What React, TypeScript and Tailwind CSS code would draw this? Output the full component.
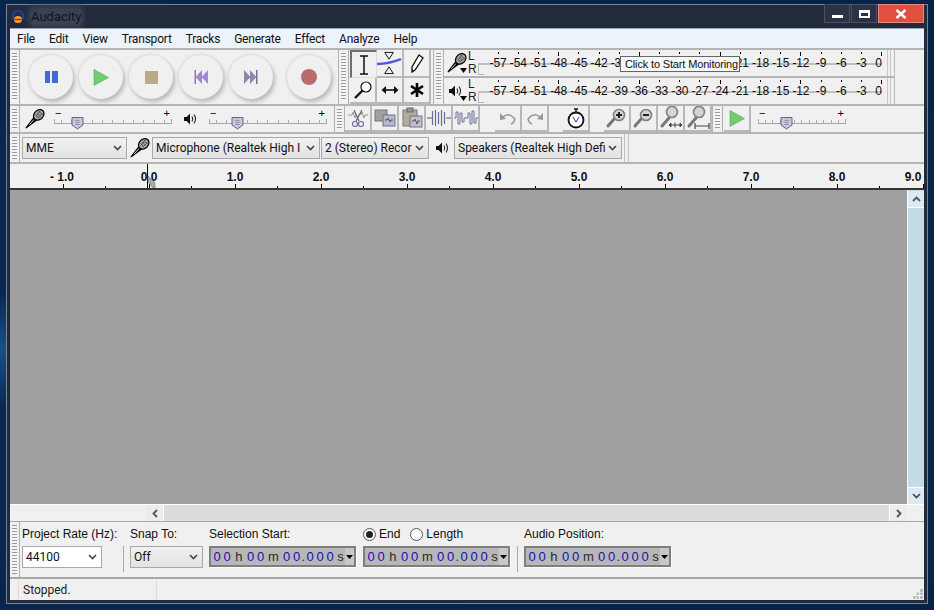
import React from "react";

const UI = { fontFamily: '"Roboto","Liberation Sans",sans-serif' };
const AR = { fontFamily: '"Liberation Sans",Arial,sans-serif' };

function Handle({ h = "h-full" }: { h?: string }) {
  return (
    <div className={`w-[10px] shrink-0 ${h} px-[2px] py-[3px] border-r border-[#b0b0b0]`}>
      <div className="w-full h-full bg-[repeating-linear-gradient(to_bottom,#9a9a9a_0,#9a9a9a_1px,#f6f6f6_1px,#f6f6f6_3px)]" />
    </div>
  );
}

function Mic({ s = 22 }: { s?: number }) {
  return (
    <svg width={s} height={s} viewBox="0 0 24 24" className="shrink-0">
      <path d="M11.5 8 L0.5 22.5 L1.5 23.5 L16 12.5 Z" fill="#000" />
      <path d="M11 12.5 L5 19" stroke="#fff" strokeWidth="1" />
      <ellipse cx="16.5" cy="7" rx="7" ry="5.5" transform="rotate(-45 16.5 7)" fill="#a8a8a8" stroke="#000" strokeWidth="1.5" />
      <path d="M12.5 6.5 L17.5 11.5 M14.5 4.5 L19.5 9.5 M16.5 2.5 L21.5 7.5 M13 9 L18 2.5 M15 11 L21 5" stroke="#333" strokeWidth="0.8" />
    </svg>
  );
}

function Speaker() {
  return (
    <svg width="16" height="16" viewBox="0 0 16 16" className="shrink-0">
      <path d="M2 6 H4.5 L8 2.5 V13.5 L4.5 10 H2 Z" fill="#111" />
      <path d="M10 5.5 Q11.5 8 10 10.5 M12 3.5 Q15 8 12 12.5" stroke="#222" fill="none" strokeWidth="1.1" />
    </svg>
  );
}

function Slider({ w, pos }: { w: number; pos: number }) {
  const ticks = Array.from({ length: 11 });
  return (
    <div className="relative h-[26px] shrink-0" style={{ width: w }}>
      <span className="absolute left-[1px] top-[1px] text-[11px] leading-[12px] text-black" style={AR}>−</span>
      <span className="absolute right-[2px] top-[1px] text-[11px] leading-[12px] text-black" style={AR}>+</span>
      <div className="absolute left-0 right-0 top-[13px] h-[5px] border-b border-l border-r border-[#a8a8a8] flex justify-between px-[6px]">
        {ticks.map((_, i) => <i key={i} className="w-px h-[3px] bg-[#aaa] mt-[1px]" />)}
      </div>
      <svg className="absolute top-[10px]" style={{ left: pos }} width="13" height="14" viewBox="0 0 13 14">
        <path d="M1 1.5 H12 V9 L6.5 13 L1 9 Z" fill="#c3c6dc" stroke="#666a78" />
        <path d="M4.5 4.5 H8.5 M4.5 6.5 H8.5 M4.5 8.5 H8.5" stroke="#8a8da0" />
      </svg>
    </div>
  );
}

function RoundBtn({ children, ml = "" }: { children: React.ReactNode; ml?: string }) {
  return (
    <div className={`w-[44px] h-[44px] shrink-0 rounded-full bg-[#f0f0f0] shadow-[2px_3px_4px_#b8b8b8,-1px_-1px_3px_#dcdcdc] flex items-center justify-center ${ml}`}>
      {children}
    </div>
  );
}

function TB({ children, w = "w-[27px]", h = "h-[28px]", pressed }: { children?: React.ReactNode; w?: string; h?: string; pressed?: boolean }) {
  return (
    <div className={`${w} ${h} shrink-0 flex items-center justify-center bg-[#f0f0f0] ${pressed ? "border-l-2 border-t-2 border-r border-b border-[#6e6e6e] border-r-[#ddd] border-b-[#ddd]" : "border-r-2 border-b-2 border-[#b8b8b8]"}`}>
      {children}
    </div>
  );
}

function Zoomer({ mark, under }: { mark?: "+" | "-"; under?: "arrows" | "bar" }) {
  return (
    <svg width="24" height="24" viewBox="0 0 24 24">
      <path d="M10 12 L3 20" stroke="#777" strokeWidth="3" strokeLinecap="round" />
      <circle cx={under ? 13 : 14} cy={under ? 6 : 9} r="5.5" fill="#d4d4d4" stroke="#808080" strokeWidth="1.6" />
      {mark && <path d="M11 9 H17" stroke="#222" strokeWidth="2" />}
      {mark === "+" && <path d="M14 6 V12" stroke="#222" strokeWidth="2" />}
      {under === "arrows" && <path d="M10 19 H23 M10 19 L12 17 V21 Z M23 19 L21 17 V21 Z M16 16.5 V21.5" stroke="#444" fill="#444" />}
      {under === "bar" && <path d="M9 20 H23 M9 17 V23 M23 17 V23" stroke="#444" strokeWidth="1.2" fill="none" />}
    </svg>
  );
}

function Wave({ kind }: { kind: "cut" | "copy" | "paste" | "trim" | "silence" }) {
  const c = "#6a6f9a";
  if (kind === "cut")
    return (
      <svg width="22" height="22" viewBox="0 0 22 22">
        <path d="M1 8 H5 L6 5 L8 11 L9 8 M14 8 L15 5 L17 11 L18 8 H21" stroke="#999" fill="none" />
        <path d="M7 3 L12 14 M15 3 L9 14" stroke="#666" strokeWidth="1.3" />
        <circle cx="8" cy="17" r="2.5" fill="none" stroke={c} strokeWidth="1.2" />
        <circle cx="14" cy="17" r="2.5" fill="none" stroke={c} strokeWidth="1.2" />
      </svg>
    );
  if (kind === "copy")
    return (
      <svg width="22" height="22" viewBox="0 0 22 22">
        <rect x="1" y="3" width="12" height="11" fill="#a0a0a0" stroke="#777" />
        <rect x="9" y="8" width="12" height="11" fill="#b8b8c8" stroke="#6a6f9a" />
        <path d="M11 13 H13 L14 11 L16 15 L17 13 H19" stroke="#555" fill="none" />
      </svg>
    );
  if (kind === "paste")
    return (
      <svg width="22" height="22" viewBox="0 0 22 22">
        <rect x="2" y="3" width="14" height="16" fill="#b4ae96" stroke="#777" />
        <rect x="6" y="1" width="6" height="4" fill="#999" stroke="#666" />
        <rect x="9" y="9" width="12" height="11" fill="#c0c0cc" stroke="#6a6f9a" />
        <path d="M11 14 H13 L14 12 L16 17 L17 14 H19" stroke="#555" fill="none" />
      </svg>
    );
  if (kind === "trim")
    return (
      <svg width="24" height="22" viewBox="0 0 24 22">
        <path d="M0 11 H5 M19 11 H24" stroke="#555" />
        <path d="M5.5 4 V18 M8.5 3 V19 M11.5 5 V17 M14.5 3 V19 M17.5 5 V17" stroke={c} strokeWidth="1.2" />
      </svg>
    );
  return (
    <svg width="24" height="22" viewBox="0 0 24 22">
      <path d="M0 11 H2 V5 H4 V17 H6 V6 H8 V15 H10 V11 H14 V6 H16 V17 H18 V4 H20 V16 H22 V11 H24" stroke={c} fill="none" />
    </svg>
  );
}

const dbs = ["-57", "-54", "-51", "-48", "-45", "-42", "-39", "-36", "-33", "-30", "-27", "-24", "-21", "-18", "-15", "-12", "-9", "-6", "-3", "0"];
const hiddenByTip = ["-36", "-33", "-30", "-27", "-24"];

function Meter({ icon, tooltip }: { icon: React.ReactNode; tooltip?: boolean }) {
  return (
    <div className={`relative flex items-stretch ${tooltip ? "h-[28px] border-b-2 border-[#b4b4b4]" : "h-[26px]"}`}>
      <div className="w-[24px] shrink-0 relative flex items-center pl-[3px]">
        {icon}
        <svg className="absolute left-[16px] bottom-[3px]" width="7" height="5" viewBox="0 0 7 5"><path d="M0 0 H7 L3.5 5 Z" fill="#000" /></svg>
      </div>
      <div className="w-[10px] shrink-0 flex flex-col justify-between text-[12px] leading-[13px] text-[#222]" style={AR}>
        <span>L</span>
        <span>R</span>
      </div>
      <div className="relative w-[412px] shrink-0">
        <div className="absolute left-0 top-[13px] bottom-[1px] w-[6px] border-l border-t border-b border-[#b8b8b8]" />
        <div className="absolute left-0 right-[8px] top-[13px] h-[2px] bg-[#c0c0c0]" />
        <div className="absolute left-[10px] top-0 h-full flex" style={AR}>
          {dbs.map((d, i) => (
            <div key={d} className="w-[20.2px] shrink-0 flex flex-col items-center">
              <div className="h-[4px] mt-[2px]">
                <i className={`block w-px ${i % 4 === 3 ? "h-[4px]" : "h-[2px]"} bg-black`} />
              </div>
              {!(tooltip && hiddenByTip.includes(d)) && (
                <span className={`text-[12px] leading-[14px] text-[#0c0c0c] whitespace-nowrap tracking-[-0.1px] ${d === "0" ? "-translate-x-[3px]" : ""}`}>{d}</span>
              )}
            </div>
          ))}
        </div>
        {tooltip && (
          <div className="absolute left-[142px] top-[6px] w-[120px] h-[16px] bg-[#f7f7f7] border border-[#666] text-[11px] leading-[14px] tracking-[-0.15px] text-[#111] pl-[4px] whitespace-nowrap z-10" style={AR}>
            Click to Start Monitoring
          </div>
        )}
      </div>
      <div className="w-[4px] -ml-[3px] border-l border-r border-[#c8c8c8]" />
      <div className="w-[3px] ml-[1px] border-r border-[#bdbdbd]" />
    </div>
  );
}

function Chevron() {
  return (
    <svg width="9" height="6" viewBox="0 0 9 6" className="shrink-0"><path d="M1 1 L4.5 4.5 L8 1" stroke="#444" strokeWidth="1.6" fill="none" /></svg>
  );
}

function Sel({ text, w, white }: { text: string; w: string; white?: boolean }) {
  return (
    <div className={`${w} h-[22px] shrink-0 border border-[#a9a9a9] flex items-center pl-[3px] pr-[4px] ${white ? "bg-white" : "bg-[linear-gradient(#f1f1f1,#e2e2e2)]"}`}>
      <span className="flex-1 overflow-hidden whitespace-nowrap text-[12px] text-[#111]" style={UI}>{text}</span>
      <span className="w-[12px] flex justify-end"><Chevron /></span>
    </div>
  );
}

function TimeBox() {
  const parts: [string, number, boolean][] = [
    ["0", 10, true], ["0", 10, true], ["h", 13.5, false], ["0", 10, true], ["0", 10, true], ["m", 16, false],
    ["0", 10, true], ["0", 10, true], [".", 3.5, false], ["0", 10, true], ["0", 10, true], ["0", 10, true], ["s", 11, false],
  ];
  return (
    <div className="w-[147px] h-[21px] shrink-0 bg-[#b7b7b7] border-2 border-[#7e7e7e] shadow-[1px_1px_0_#fff] flex items-center pl-[1px] relative">
      {parts.map(([c, w, blue], i) => (
        <span key={i} className={`text-[13px] text-center leading-none shrink-0 ${blue ? "text-[#1a10b0]" : "text-[#2a2a2a]"}`} style={{ width: w, ...AR }}>{c}</span>
      ))}
      <div className="absolute right-0 top-0 bottom-0 w-[9px] bg-[#c8c8c8] flex items-center justify-center">
        <svg width="7" height="4" viewBox="0 0 7 4"><path d="M0 0 H7 L3.5 4 Z" fill="#000" /></svg>
      </div>
    </div>
  );
}

const ruler = ["- 1.0", "0.0", "1.0", "2.0", "3.0", "4.0", "5.0", "6.0", "7.0", "8.0", "9.0"];

function Ruler() {
  return (
    <div className="relative h-[28px] bg-[#f0f0f0] flex pl-[10px] border-t-2 border-[#b4b4b4] border-b-2 border-b-[#333] overflow-hidden shrink-0">
      {ruler.map((r, i) => (
        <div key={r} className="relative w-[86px] shrink-0 flex flex-col items-center justify-end">
          <span className={`text-[12px] font-bold leading-[14px] text-[#111] ${i === 10 ? "-translate-x-[10px]" : ""} ${i === 0 ? "-translate-x-[1px]" : ""}`} style={AR}>{r}</span>
          <i className="w-px h-[4px] bg-black" />
          <i className="absolute bottom-0 right-0 w-px h-[2px] bg-black" />
        </div>
      ))}
      <i className="absolute left-[137px] top-0 bottom-0 w-px bg-black" />
      <svg className="absolute left-[137px] bottom-0" width="9" height="13" viewBox="0 0 9 13"><path d="M1 1 L8 8 V13 H6 L1 7 Z" fill="#a8a8a8" stroke="#777" strokeWidth="0.6" /></svg>
    </div>
  );
}

export default function App() {
  return (
    <div className="w-[934px] h-[610px] overflow-hidden pt-[4px] pl-[6px] bg-[radial-gradient(circle_at_0_350px,#1c4f86_0,#08264e_6%,#05224a_100%)]">
      <div className="w-[922px] h-[600px] flex flex-col bg-[#222b3c] border border-[#7c8390] px-[3px] pb-[3px]">
        {/* Title bar */}
        <div className="h-[23px] shrink-0 flex items-start justify-between">
          <div className="flex items-center h-[23px] gap-[6px] pl-[1px]">
            <svg width="14" height="14" viewBox="0 0 14 14">
              <path d="M2 9 V6 A5 5 0 0 1 12 6 V9" stroke="#1f3fb0" strokeWidth="2.2" fill="none" />
              <ellipse cx="7" cy="9.5" rx="4" ry="3.5" fill="#f2a818" />
              <path d="M3.5 9.5 H10.5" stroke="#d02020" strokeWidth="1.6" />
            </svg>
            <span className="text-[13px] leading-[16px] text-[#0f141c] bg-[#3a4254] shadow-[0_0_5px_3px_#3a4254] rounded-sm" style={UI}>Audacity</span>
          </div>
          <div className="flex items-start gap-px -mt-px">
            <div className="w-[26px] h-[19px] flex items-center justify-center border border-[#4a5263] bg-[#2a3243]">
              <i className="w-[11px] h-[3px] mt-[6px] bg-white" />
            </div>
            <div className="w-[26px] h-[19px] flex items-center justify-center border border-[#4a5263] bg-[#2a3243]">
              <i className="w-[11px] h-[8px] border-2 border-t-[3px] border-white" />
            </div>
            <div className="w-[46px] h-[19px] flex items-center justify-center bg-[#df5040] border border-[#e88a80]">
              <svg width="12" height="10" viewBox="0 0 12 10"><path d="M1.5 1 L10.5 9 M10.5 1 L1.5 9" stroke="#fff" strokeWidth="2.4" /></svg>
            </div>
          </div>
        </div>

        {/* Client */}
        <div className="flex-1 min-h-0 flex flex-col bg-[#f0f0f0] border-t border-[#9aa4b4]">
          {/* Menu */}
          <div className="h-[19px] shrink-0 flex items-center bg-[#ecf3fb] pl-[7px] gap-[14px] text-[12px] tracking-[-0.2px] text-[#111]" style={UI}>
            {["File", "Edit", "View", "Transport", "Tracks", "Generate", "Effect", "Analyze", "Help"].map((m) => (
              <span key={m}>{m}</span>
            ))}
          </div>

          {/* Row 1 */}
          <div className="h-[58px] shrink-0 flex border-t-2 border-b-2 border-[#b4b4b4]">
            <div className="w-[329px] shrink-0 flex items-center border-r border-[#b4b4b4]">
              <Handle />
              <div className="flex items-center pl-[9px] gap-[6px]">
                <RoundBtn>
                  <div className="flex gap-[2px]"><i className="w-[5px] h-[12px] bg-[#4169d8]" /><i className="w-[6px] h-[12px] bg-[#4169d8]" /></div>
                </RoundBtn>
                <RoundBtn>
                  <svg width="16" height="17" viewBox="0 0 16 17"><path d="M1 0.5 L15.5 8.5 L1 16.5 Z" fill="#71cc71" stroke="#58a858" strokeWidth="0.6" /></svg>
                </RoundBtn>
                <RoundBtn><i className="w-[13px] h-[13px] bg-[#b7ab8c]" /></RoundBtn>
                <RoundBtn>
                  <svg width="14" height="14" viewBox="0 0 14 14"><path d="M0.5 0 H2 V14 H0.5 Z" fill="#8a78b8" /><path d="M8 0 V14 L1.5 7 Z M14 0 V14 L7.5 7 Z" fill="#a08ad0" /></svg>
                </RoundBtn>
                <RoundBtn>
                  <svg width="14" height="14" viewBox="0 0 14 14"><path d="M12 0 H13.5 V14 H12 Z" fill="#776e96" /><path d="M0 0 V14 L6.5 7 Z M6 0 V14 L12.5 7 Z" fill="#9086b0" /></svg>
                </RoundBtn>
                <RoundBtn ml="ml-[8px]"><i className="w-[16px] h-[16px] rounded-full bg-[#b86c6c]" /></RoundBtn>
              </div>
            </div>
            <div className="w-[95px] shrink-0 flex border-r border-[#b4b4b4]">
              <Handle />
              <div className="grid grid-cols-3 grid-rows-[28px_26px] w-[81px] ml-px">
                <TB pressed><svg width="12" height="20" viewBox="0 0 12 20"><path d="M2 1 H10 M6 1 V19 M2 19 H10" stroke="#111" strokeWidth="1.5" /></svg></TB>
                <TB>
                  <svg width="26" height="24" viewBox="0 0 26 24"><path d="M8 1 H17 L12.5 8 Z M8 23 H17 L12.5 16 Z" fill="none" stroke="#111" /><path d="M0 13 Q12 13 25 8" stroke="#5558d8" strokeWidth="2.5" fill="none" /></svg>
                </TB>
                <TB><svg width="16" height="20" viewBox="0 0 16 20"><path d="M10 2 L14 5 L6 17 L3 19 L3 14 Z" fill="#fff" stroke="#111" strokeWidth="1.3" /><path d="M3 19 L3 16 L5 18 Z" fill="#111" /></svg></TB>
                <TB h="h-[26px]"><svg width="20" height="20" viewBox="0 0 20 20"><circle cx="13" cy="7" r="5" fill="#fff" stroke="#111" strokeWidth="1.2" /><path d="M9.5 10.5 L2 18" stroke="#111" strokeWidth="2.4" /></svg></TB>
                <TB h="h-[26px]"><svg width="18" height="10" viewBox="0 0 18 10"><path d="M4 5 H14" stroke="#111" strokeWidth="1.6" /><path d="M0.5 5 L5 1 V9 Z M17.5 5 L13 1 V9 Z" fill="#111" /></svg></TB>
                <TB h="h-[26px]"><svg width="16" height="16" viewBox="0 0 16 16"><path d="M8 1 V15 M2 4 L14 12 M14 4 L2 12" stroke="#000" strokeWidth="2.6" /></svg></TB>
              </div>
            </div>
            <div className="flex-1 flex min-w-0">
              <Handle />
              <div className="flex flex-col">
                <Meter icon={<Mic s={20} />} tooltip />
                <Meter icon={<Speaker />} />
              </div>
            </div>
          </div>

          {/* Row 2 */}
          <div className="h-[28px] shrink-0 flex items-center border-b-2 border-[#b4b4b4]">
            <Handle />
            <div className="ml-[5px]"><Mic s={20} /></div>
            <div className="ml-[9px]"><Slider w={118} pos={17} /></div>
            <div className="ml-[10px]"><Speaker /></div>
            <div className="ml-[11px]"><Slider w={118} pos={22} /></div>
            <div className="ml-[7px] flex items-center h-full border-l border-[#b4b4b4]"><Handle /></div>
            <div className="flex items-center">
              <TB h="h-[26px]"><Wave kind="cut" /></TB>
              <TB h="h-[26px]"><Wave kind="copy" /></TB>
              <TB h="h-[26px]"><Wave kind="paste" /></TB>
              <TB h="h-[26px]"><Wave kind="trim" /></TB>
              <TB h="h-[26px]"><Wave kind="silence" /></TB>
            </div>
            <div className="flex items-center ml-[15px]">
              <TB h="h-[26px]"><svg width="18" height="14" viewBox="0 0 18 14"><path d="M3 7 Q9 0 16 8 Q15 12 12 13" stroke="#999" strokeWidth="1.5" fill="none" /><path d="M1 2 L1 9 L7 8 Z" fill="#999" /></svg></TB>
              <TB h="h-[26px]"><svg width="18" height="14" viewBox="0 0 18 14"><path d="M15 7 Q9 0 2 8 Q3 12 6 13" stroke="#999" strokeWidth="1.5" fill="none" /><path d="M17 2 L17 9 L11 8 Z" fill="#999" /></svg></TB>
            </div>
            <div className="ml-[14px]">
              <TB h="h-[26px]">
                <svg width="20" height="22" viewBox="0 0 20 22"><circle cx="10" cy="13" r="7.5" fill="#fff" stroke="#111" strokeWidth="1.8" /><path d="M8 2 H12 M10 2 V5" stroke="#111" strokeWidth="1.3" fill="none" /><path d="M7 10 L10 15 L13 10" stroke="#2a2ac0" fill="none" /></svg>
              </TB>
            </div>
            <div className="flex items-center ml-[14px]">
              <TB h="h-[26px]"><Zoomer mark="+" /></TB>
              <TB h="h-[26px]"><Zoomer mark="-" /></TB>
              <TB h="h-[26px]"><Zoomer under="arrows" /></TB>
              <TB h="h-[26px]"><Zoomer under="bar" /></TB>
            </div>
            <div className="h-full border-l border-[#b4b4b4]"><Handle /></div>
            <div className="ml-px"><TB h="h-[26px]"><svg width="16" height="17" viewBox="0 0 16 17"><path d="M1 0.5 L15.5 8.5 L1 16.5 Z" fill="#71cc71" stroke="#58a858" strokeWidth="0.6" /></svg></TB></div>
            <div className="ml-[7px]"><Slider w={88} pos={22} /></div>
          </div>

          {/* Row 3 */}
          <div className="h-[28px] shrink-0 flex items-center">
            <Handle />
            <div className="ml-[2px]"><Sel text="MME" w="w-[105px]" /></div>
            <div className="ml-[3px]"><Mic s={20} /></div>
            <div className="ml-[2px]"><Sel text="Microphone (Realtek High I" w="w-[168px]" /></div>
            <div className="ml-px"><Sel text="2 (Stereo) Recor" w="w-[108px]" /></div>
            <div className="ml-[5px]"><Speaker /></div>
            <div className="ml-[4px]"><Sel text="Speakers (Realtek High Defi" w="w-[168px]" /></div>
            <div className="ml-[2px] h-full w-[5px] border-l border-r border-[#c0c0c0]" />
          </div>

          <Ruler />

          {/* Track area + vertical scrollbar */}
          <div className="flex-1 min-h-0 flex">
            <div className="flex-1 bg-[#a0a0a0]" />
            <div className="w-[17px] shrink-0 flex flex-col border-l border-white bg-[#c4dbe8] pt-px">
              <div className="h-[16px] flex items-center justify-center bg-[#dce9f3]"><svg width="9" height="6" viewBox="0 0 9 6"><path d="M1 5 L4.5 1.5 L8 5" stroke="#555" strokeWidth="1.8" fill="none" /></svg></div>
              <div className="flex-1 border-t border-b border-white" />
              <div className="h-[16px] flex items-center justify-center bg-[#dce9f3]"><Chevron /></div>
            </div>
          </div>

          {/* Horizontal scrollbar */}
          <div className="h-[17px] shrink-0 flex border-t border-white">
            <div className="w-[136px] bg-[#f0f0f0]" />
            <div className="w-[17px] flex items-center justify-center bg-[#ececec]"><svg width="6" height="9" viewBox="0 0 6 9"><path d="M5 1 L1.5 4.5 L5 8" stroke="#555" strokeWidth="1.8" fill="none" /></svg></div>
            <div className="flex-1 bg-[#dcdcdc] border-l border-r border-white" />
            <div className="w-[17px] flex items-center justify-center bg-[#ececec]"><svg width="6" height="9" viewBox="0 0 6 9"><path d="M1 1 L4.5 4.5 L1 8" stroke="#555" strokeWidth="1.8" fill="none" /></svg></div>
            <div className="w-[17px] bg-[#f0f0f0]" />
          </div>

          {/* Selection bar */}
          <div className="h-[56px] shrink-0 flex border-t border-[#a8a8a8] text-[12px] text-[#111]" style={AR}>
            <Handle />
            <div className="ml-[2px] flex flex-col pt-[5px] w-[101px] shrink-0">
              <span className="leading-[14px] mb-[5px]">Project Rate (Hz):</span>
              <Sel text="44100" w="w-[80px]" white />
            </div>
            <div className="w-px h-[26px] mt-[24px] bg-[#a8a8a8] shrink-0" />
            <div className="ml-[6px] flex flex-col pt-[5px] w-[79px] shrink-0">
              <span className="leading-[14px] mb-[5px]">Snap To:</span>
              <Sel text="Off" w="w-[73px]" />
            </div>
            <div className="flex flex-col pt-[5px] w-[154px] shrink-0">
              <span className="leading-[14px] mb-[5px]">Selection Start:</span>
              <TimeBox />
            </div>
            <div className="flex flex-col pt-[5px] w-[154px] shrink-0">
              <div className="flex items-center h-[14px] mb-[5px]">
                <i className="w-[13px] h-[13px] rounded-full border border-[#555] bg-white flex items-center justify-center"><i className="w-[7px] h-[7px] rounded-full bg-[#222]" /></i>
                <span className="ml-[3px]">End</span>
                <i className="ml-[10px] w-[13px] h-[13px] rounded-full border border-[#555] bg-white" />
                <span className="ml-[3px]">Length</span>
              </div>
              <TimeBox />
            </div>
            <div className="w-px h-[26px] mt-[24px] bg-[#a8a8a8] shrink-0" />
            <div className="ml-[6px] flex flex-col pt-[5px] shrink-0">
              <span className="leading-[14px] mb-[5px]">Audio Position:</span>
              <TimeBox />
            </div>
          </div>

          {/* Status bar */}
          <div className="h-[23px] shrink-0 flex items-center border-t-2 border-[#a8a8a8] relative text-[12px] text-[#222]" style={UI}>
            <div className="w-[9px] h-full border-r border-[#dcdcdc]" />
            <div className="w-[138px] h-full flex items-center pl-[4px] pt-px border-r border-[#dcdcdc]">Stopped.</div>
            <svg className="absolute right-[1px] bottom-[1px]" width="10" height="10" viewBox="0 0 10 10"><path d="M7 0 H10 V3 H7 Z M3.5 3.5 H6 V6 H3.5 Z M7 3.5 H10 V6 H7 Z M0 7 H2.5 V10 H0 Z M3.5 7 H6 V10 H3.5 Z M7 7 H10 V10 H7 Z" fill="#bdbdbd" /></svg>
          </div>
        </div>
      </div>
    </div>
  );
}
